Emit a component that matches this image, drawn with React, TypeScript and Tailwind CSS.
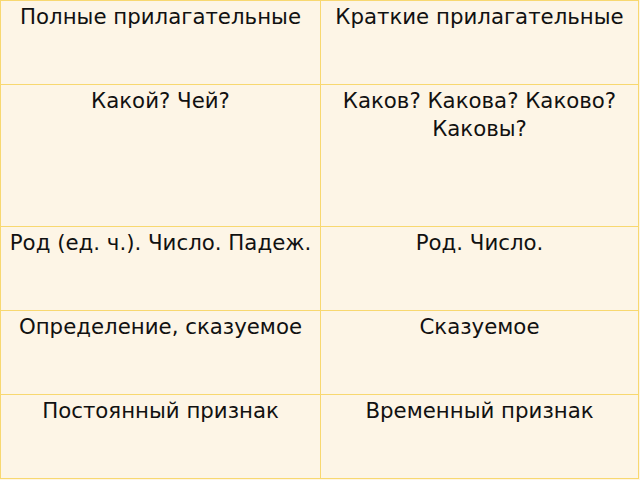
const rows: [string, string][] = [
  ['Полные прилагательные', 'Краткие прилагательные'],
  ['Какой? Чей?', 'Каков? Какова? Каково? Каковы?'],
  ['Род (ед. ч.). Число. Падеж.', 'Род. Число.'],
  ['Определение, сказуемое', 'Сказуемое'],
  ['Постоянный признак', 'Временный признак'],
];

export default function App() {
  return (
    <div className="w-[640px] h-[480px] bg-[#fdf5e6]">
      <div
        className="grid w-[639px] h-[479px] grid-cols-[320px_1fr] grid-rows-[84px_142px_84px_84px_1fr] border-l border-t border-[#f8d870] text-[21.3px] leading-[28px] text-[#111] text-center"
        style={{ fontFamily: '"DejaVu Sans", sans-serif' }}
      >
        {rows.map(([left, right], i) => (
          <div key={i} className="contents">
            <div className="border-r border-b border-[#f8d870] pt-[2px] px-1">{left}</div>
            <div className="border-r border-b border-[#f8d870] pt-[2px] px-1">{right}</div>
          </div>
        ))}
      </div>
    </div>
  );
}
